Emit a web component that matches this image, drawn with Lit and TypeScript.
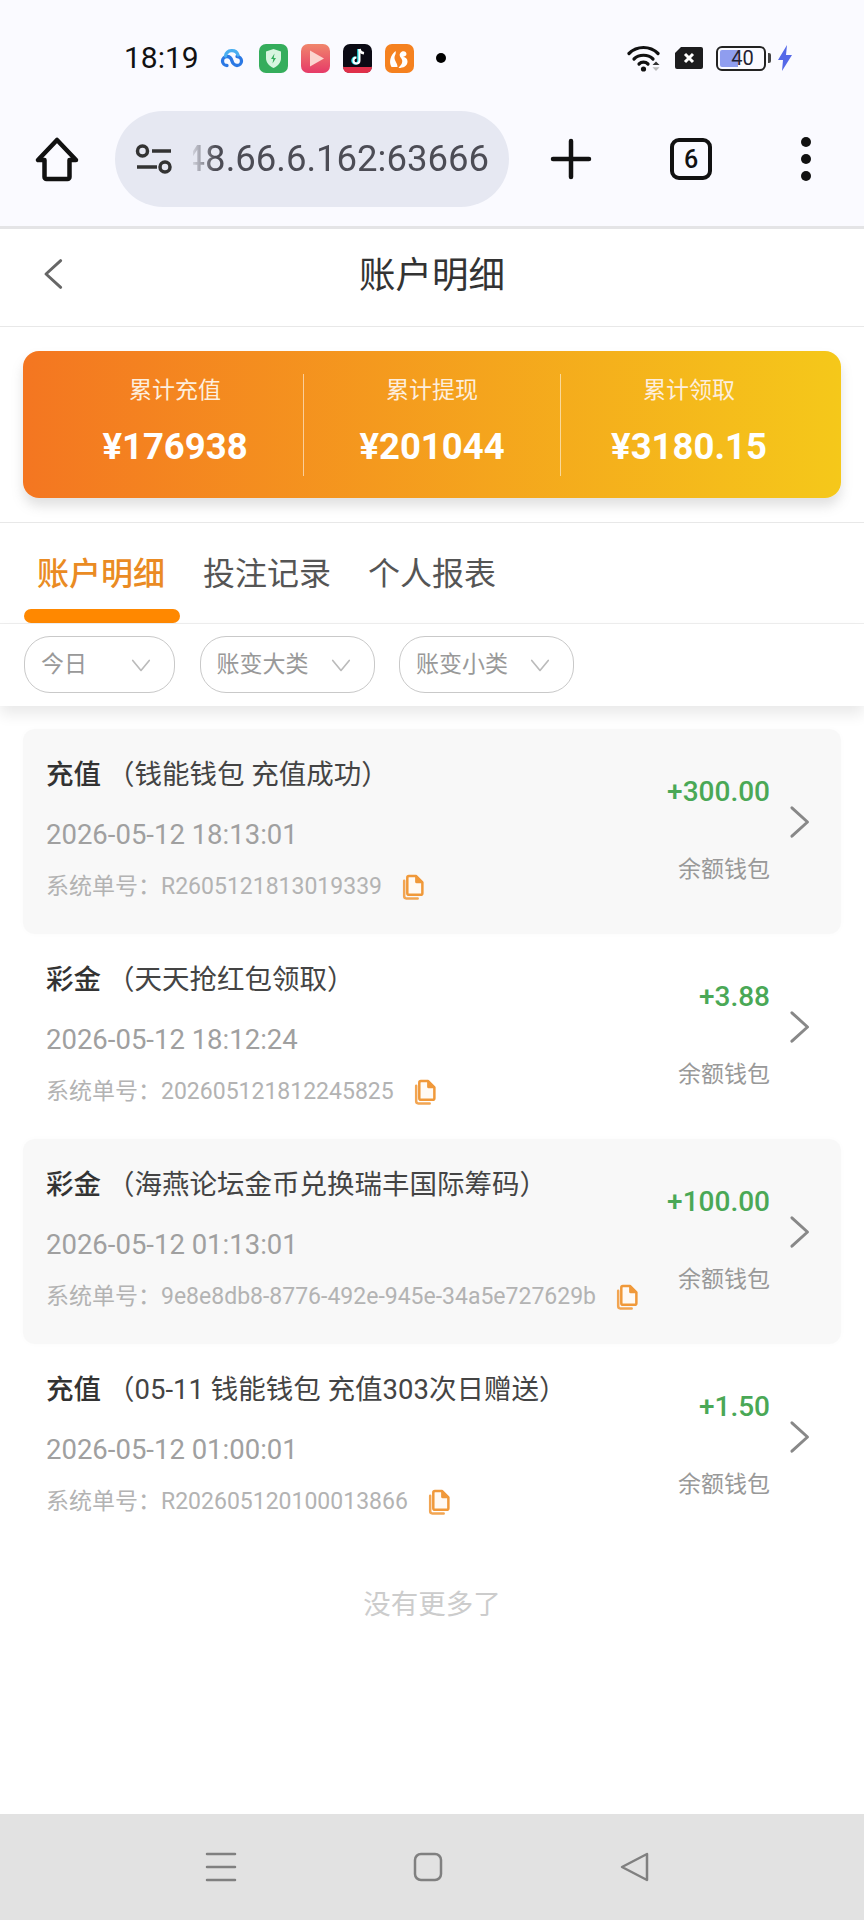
import { LitElement, html, css, svg } from "lit";
import { customElement } from "lit/decorators.js";

const rows = [
  { type: "充值", note: "（钱能钱包 充值成功）", time: "2026-05-12 18:13:01", no: "R2605121813019339", amt: "+300.00", alt: true },
  { type: "彩金", note: "（天天抢红包领取）", time: "2026-05-12 18:12:24", no: "202605121812245825", amt: "+3.88", alt: false },
  { type: "彩金", note: "（海燕论坛金币兑换瑞丰国际筹码）", time: "2026-05-12 01:13:01", no: "9e8e8db8-8776-492e-945e-34a5e727629b", amt: "+100.00", alt: true },
  { type: "充值", note: "（05-11 钱能钱包 充值303次日赠送）", time: "2026-05-12 01:00:01", no: "R202605120100013866", amt: "+1.50", alt: false },
];
const stats = [
  ["累计充值", "¥176938"],
  ["累计提现", "¥201044"],
  ["累计领取", "¥3180.15"],
];
const filters = [
  { label: "今日", w: 151 },
  { label: "账变大类", w: 175 },
  { label: "账变小类", w: 175 },
];

const copyIcon = svg`<svg class="copy" viewBox="0 0 22 25" width="23" height="26">
  <path d="M3 6.500V21.500a2 2 0 0 0 2 2H16" fill="none" stroke="#f2a552" stroke-width="2.400" stroke-linecap="round"/>
  <path d="M7.500 2H14.500L20.500 8V18.500a1.500 1.500 0 0 1-1.500 1.500H7.500A1.500 1.500 0 0 1 6 18.500V3.500A1.500 1.500 0 0 1 7.500 2Z" fill="#fffaf4" stroke="#f0993a" stroke-width="2.400" stroke-linejoin="round"/>
  <path d="M13.500 1.500H15L21 7.500V9H15A1.500 1.500 0 0 1 13.500 7.500Z" fill="#f0993a"/>
</svg>`;
const chev = (cls: string, d: string) => svg`<svg class=${cls} viewBox="0 0 24 24" fill="none" stroke="currentColor" stroke-linecap="round" stroke-linejoin="round"><path d=${d}/></svg>`;

@customElement("app-root")
export class AppRoot extends LitElement {
  static styles = css`
    :host { display: block; width: 864px; height: 1920px; background: #fff; overflow: hidden;
      font-family: Roboto, "Noto Sans CJK SC", sans-serif; }
    .page { height: 1920px; display: flex; flex-direction: column; }
    .chrome { height: 226px; background: #fafaff; border-bottom: 3px solid #e4e4e6; display: flex; flex-direction: column; box-sizing: content-box; }
    .status { height: 44px; margin-top: 36px; display: flex; align-items: center; padding-left: 124px; }
    .clock { font-size: 30px; color: #111; width: 96px; line-height: 1; }
    .app { display: block; width: 29px; height: 29px; margin-right: 13px; }
    .cloud { width: 24px; height: 20px; margin-right: 15px; }
    .dot { width: 10px; height: 10px; border-radius: 50%; background: #000; margin-left: 9px; }
    .status-right { margin-left: auto; display: flex; align-items: center; margin-right: 71px; }
    .wifi { width: 35px; height: 28px; margin-right: 12px; }
    .xbox { width: 30px; height: 24px; margin-right: 12px; }
    .batt { width: 50px; height: 25px; box-sizing: border-box; border: 2px solid #222; border-radius: 6px; position: relative; display: flex; align-items: center; justify-content: center; font-size: 20px; color: #223; line-height: 1; padding-left: 3px; }
    .batt-fill { position: absolute; left: 2px; top: 2px; bottom: 2px; width: 18px; background: #8f9def; border-radius: 2px 0 0 2px; }
    .batt-num { position: relative; }
    .nub { width: 3px; height: 10px; background: #444; margin-left: 2px; margin-right: 6px; border-radius: 0 2px 2px 0; }
    .bolt { width: 16px; height: 26px; }
    .toolbar { display: flex; align-items: center; height: 96px; margin-top: 31px; padding-left: 34px; }
    .home { width: 46px; height: 46px; margin-right: 35px; }
    .pill { width: 394px; height: 96px; border-radius: 48px; background: #e6e8f2; display: flex; align-items: center; padding-left: 20px; box-sizing: border-box; }
    .tune { width: 38px; height: 32px; margin-right: 20px; }
    .url { width: 296px; overflow: hidden; display: flex; justify-content: flex-end; font-size: 36.500px; line-height: 1.200; color: #4c4c55; white-space: nowrap; -webkit-mask-image: linear-gradient(90deg, rgba(0,0,0,.15) 0, #000 22px); mask-image: linear-gradient(90deg, rgba(0,0,0,.15) 0, #000 22px); }
    .plus { width: 42px; height: 42px; margin-left: 41px; }
    .tabs-btn { width: 42px; height: 42px; box-sizing: border-box; border: 4px solid #111; border-radius: 9px; margin-left: 78px; display: flex; align-items: center; justify-content: center; font-size: 25px; font-weight: 500; color: #111; line-height: 1; }
    .kebab { display: flex; flex-direction: column; gap: 7px; margin-left: 89px; }
    .kebab i { display: block; width: 10px; height: 10px; border-radius: 50%; background: #111; }

    .nav { height: 98px; box-sizing: border-box; padding-bottom: 2px; border-bottom: 1px solid #e8e8e8; position: relative; display: flex; align-items: center; justify-content: center; }
    .nav-title { font-size: 36.500px; color: #333; line-height: 1; }
    .back { position: absolute; left: 38px; top: 26px; width: 32px; height: 38px; color: #666; stroke-width: 2.200; }

    .summary-wrap { height: 196px; box-sizing: border-box; padding: 24px 23px 0; border-bottom: 1px solid #e8e8e8; }
    .summary { height: 147px; box-sizing: border-box; padding: 0 24px; border-radius: 16px; background: linear-gradient(90deg, #f47621, #f5c81a); box-shadow: 0 8px 12px rgba(120,120,120,.22); display: flex; align-items: center; color: #fff; }
    .stat { flex: 1; height: 102px; display: flex; flex-direction: column; align-items: center; }
    .stat + .stat { border-left: 1px solid rgba(255,255,255,.55); }
    .stat-label { font-size: 23px; line-height: 32px; margin-top: 1px; color: #fdeedd; }
    .stat-value { font-size: 36.500px; font-weight: 700; line-height: 42px; margin-top: 19px; white-space: nowrap; }

    .tabbar { height: 101px; border-bottom: 1px solid #eee; padding-left: 24px; display: flex; position: relative; box-sizing: border-box; }
    .tab { font-size: 32px; color: #555; line-height: 1; padding-top: 35px; margin-right: 37px; }
    .tab.on { color: #ea8b23; width: 156px; margin-right: 23px; padding-left: 13px; box-sizing: border-box; white-space: nowrap; position: relative; font-weight: 500; }
    .tab.on::after { content: ""; position: absolute; left: 0; bottom: 0; width: 156px; height: 14px; background: #ff8800; border-radius: 7px; }

    .filters { height: 82px; box-sizing: border-box; padding: 12px 24px 0; display: flex; gap: 24.500px; align-items: flex-start; box-shadow: 0 8px 14px rgba(0,0,0,.09); position: relative; background: #fff; }
    .filter { height: 57px; box-sizing: border-box; border: 1.500px solid #c9c9c9; border-radius: 26px; display: flex; align-items: center; padding-left: 16px; font-size: 23px; color: #999; line-height: 1; position: relative; }
    .caret { position: absolute; right: 21px; top: 17px; width: 24px; height: 22px; color: #bbb; stroke-width: 1.800; }

    .list { padding-top: 23px; display: flex; flex-direction: column; }
    .row { height: 205px; margin: 0 23px; box-sizing: border-box; border-radius: 12px; padding-left: 23px; position: relative; display: flex; }
    .row.alt { background: #f8f8f8; box-shadow: 0 0 6px rgba(0,0,0,.02); }
    .main { padding-top: 28px; display: flex; flex-direction: column; }
    .title { font-size: 27.500px; line-height: 36px; color: #444; white-space: nowrap; }
    .title b { font-weight: 500; color: #333; margin-right: 6px; }
    .time { font-size: 27.500px; line-height: 36px; margin-top: 24px; color: #a0a0a0; white-space: nowrap; }
    .no { font-size: 23px; line-height: 30px; margin-top: 19px; color: #b3b3b3; white-space: nowrap; display: flex; align-items: center; }
    .copy { margin-left: 19px; flex: none; }
    .side { position: absolute; right: 71px; top: 43px; text-align: right; }
    .amt { font-size: 28px; font-weight: 500; line-height: 40px; color: #4aa856; white-space: nowrap; }
    .wallet { font-size: 23px; line-height: 32px; margin-top: 42px; color: #999; white-space: nowrap; }
    .go { position: absolute; right: 25px; top: 73px; width: 34px; height: 40px; color: #888; stroke-width: 2.100; }

    .more { text-align: center; font-size: 27.500px; line-height: 36px; color: #ccc; margin-top: 38px; }
    .spacer { flex: 1; }
    .sysnav { height: 106px; background: #e2e2e2; display: flex; align-items: flex-start; padding-top: 37px; box-sizing: border-box; }
    .sysnav svg { display: block; }
    .s1 { width: 32px; height: 32px; margin-left: 205px; }
    .s2 { width: 32px; height: 32px; margin-left: 175px; }
    .s3 { width: 32px; height: 32px; margin-left: 175px; }
  `;

  render() {
    return html`<div class="page">
      <div class="chrome">
        <div class="status">
          <span class="clock">18:19</span>
          <svg class="cloud" viewBox="0 0 24 20" fill="none" stroke-width="3.300" stroke-linecap="round">
            <path d="M7 17.500a4.500 4.500 0 0 1 0-9c3 0 4.500 2.600 5 4.500s2.500 4.500 5 4.500a4.500 4.500 0 0 0 0-9" stroke="#2b78e4"/>
            <path d="M5.500 8a6.500 6.500 0 0 1 12.500-1" stroke="#4aaef0"/>
          </svg>
          <svg class="app" viewBox="0 0 29 29"><rect width="29" height="29" rx="7" fill="#35ad5c"/><path d="M14.500 5l7.500 2.600v6.500c0 4.800-3.200 8-7.500 9.900C10.200 22.100 7 18.900 7 14.100V7.600Z" fill="#d8f5e0"/><path d="M15.500 9.500l-3.500 5.500h2.300l-.8 4.500 3.500-5.500h-2.300Z" fill="#35ad5c"/></svg>
          <svg class="app" viewBox="0 0 29 29"><defs><linearGradient id="r" x1="0" y1="0" x2="0" y2="1"><stop offset="0" stop-color="#f0866c"/><stop offset="1" stop-color="#e63a68"/></linearGradient></defs><rect width="29" height="29" rx="7" fill="url(#r)"/><path d="M9 6.500L23 14.500 9 22.500Z" fill="#fbd4cf"/></svg>
          <svg class="app" viewBox="0 0 29 29"><rect width="29" height="29" rx="7" fill="#0b0a14"/><path d="M0 23h29v0a6 6 0 0 1-6 6H6a6 6 0 0 1-6-6Z" fill="#e0304a"/><path d="M15.500 5v11.500a3 3 0 1 1-3-3" fill="none" stroke="#25e0e6" stroke-width="2.600"/><path d="M16.500 5c.3 2.500 2 4 4.500 4.300" fill="none" stroke="#fff" stroke-width="2.600"/><path d="M16.500 5v11.500a3 3 0 1 1-3-3" fill="none" stroke="#fff" stroke-width="2"/></svg>
          <svg class="app" viewBox="0 0 29 29"><rect width="29" height="29" rx="7" fill="#f5811f"/><path d="M6.500 23c-3-5-1-12 4-16 1 3-1 4-1 7 0 3 3 5 3 9Z" fill="#fff"/><path d="M13.500 24c5 0 9-2 9-6.500 0-3-2-4.500-4.500-4.500 1.500-.5 3.500-1 3.500-3s-2-3.500-4.500-2.500c-2 1-3 3-2 5s3 3 2 6.500c-.5 1.500-2.500 3.500-3.500 5Z" fill="#fff"/></svg>
          <span class="dot"></span>
          <div class="status-right">
            <svg class="wifi" viewBox="0 0 35 28" fill="none" stroke="#111" stroke-width="3.200" stroke-linecap="round">
              <path d="M2 9.500c8-8 21-8 29 0"/><path d="M7 15c5-5 14-5 19 0"/><path d="M12 20c2.500-2.500 6.500-2.500 9 0"/>
              <circle cx="16.500" cy="25" r="2.600" fill="#111" stroke="none"/>
              <path d="M29 17.500l3.500 3.500h-7Z" fill="#333" stroke="none"/><path d="M29 27l3.500-3.800h-7Z" fill="#bbb" stroke="none"/>
            </svg>
            <svg class="xbox" viewBox="0 0 30 24"><path d="M7 1H27a2 2 0 0 1 2 2V21a2 2 0 0 1-2 2H3a2 2 0 0 1-2-2V7Z" fill="#1c1c1e"/><path d="M11 8l8 8M19 8l-8 8" stroke="#fff" stroke-width="3"/></svg>
            <div class="batt"><span class="batt-fill"></span><span class="batt-num">40</span></div>
            <span class="nub"></span>
            <svg class="bolt" viewBox="0 0 16 26"><path d="M10 0L1 15h5l-1 11 10-16h-6Z" fill="#5468e8"/></svg>
          </div>
        </div>
        <div class="toolbar">
          <svg class="home" viewBox="0 0 46 46" fill="none" stroke="#111" stroke-width="4.500" stroke-linejoin="round"><path d="M23 4L4 24h6.500v17a2 2 0 0 0 2 2h21a2 2 0 0 0 2-2V24H42Z"/></svg>
          <div class="pill">
            <svg class="tune" viewBox="0 0 38 32" fill="none" stroke="#333" stroke-width="3.500"><circle cx="7.500" cy="8" r="5"/><path d="M17 8H36M2 24H22"/><circle cx="30" cy="24" r="5"/></svg>
            <div class="url"><span>48.66.6.162:63666</span></div>
          </div>
          <svg class="plus" viewBox="0 0 42 42" stroke="#111" stroke-width="4.500" stroke-linecap="round"><path d="M21 3V39M3 21H39"/></svg>
          <div class="tabs-btn">6</div>
          <div class="kebab"><i></i><i></i><i></i></div>
        </div>
      </div>

      <div class="nav">
        ${chev("back", "M17 2L6 12L17 22")}
        <span class="nav-title">账户明细</span>
      </div>

      <div class="summary-wrap">
        <div class="summary">
          ${stats.map(([l, v]) => html`<div class="stat"><span class="stat-label">${l}</span><span class="stat-value">${v}</span></div>`)}
        </div>
      </div>

      <div class="tabbar">
        <div class="tab on">账户明细</div>
        <div class="tab">投注记录</div>
        <div class="tab">个人报表</div>
      </div>

      <div class="filters">
        ${filters.map((f) => html`<div class="filter" style="width:${f.w}px">${f.label}${chev("caret", "M3 7l9 11 9-11")}</div>`)}
      </div>

      <div class="list">
        ${rows.map((r) => html`<div class="row ${r.alt ? "alt" : ""}">
          <div class="main">
            <div class="title"><b>${r.type}</b>${r.note}</div>
            <div class="time">${r.time}</div>
            <div class="no">系统单号：${r.no}${copyIcon}</div>
          </div>
          <div class="side">
            <div class="amt">${r.amt}</div>
            <div class="wallet">余额钱包</div>
          </div>
          ${chev("go", "M7 2L18 12L7 22")}
        </div>`)}
        <div class="more">没有更多了</div>
      </div>
      <div class="spacer"></div>

      <div class="sysnav">
        <svg class="s1" viewBox="0 0 32 32" stroke="#808080" stroke-width="2.500" stroke-linecap="round"><path d="M2 3H30M2 16H30M2 29H30"/></svg>
        <svg class="s2" viewBox="0 0 32 32" fill="none" stroke="#808080" stroke-width="2.500"><rect x="3" y="3" width="26" height="26" rx="6"/></svg>
        <svg class="s3" viewBox="0 0 32 32" fill="none" stroke="#808080" stroke-width="2.500" stroke-linejoin="round"><path d="M28 3L3 16l25 13Z"/></svg>
      </div>
    </div>`;
  }
}
